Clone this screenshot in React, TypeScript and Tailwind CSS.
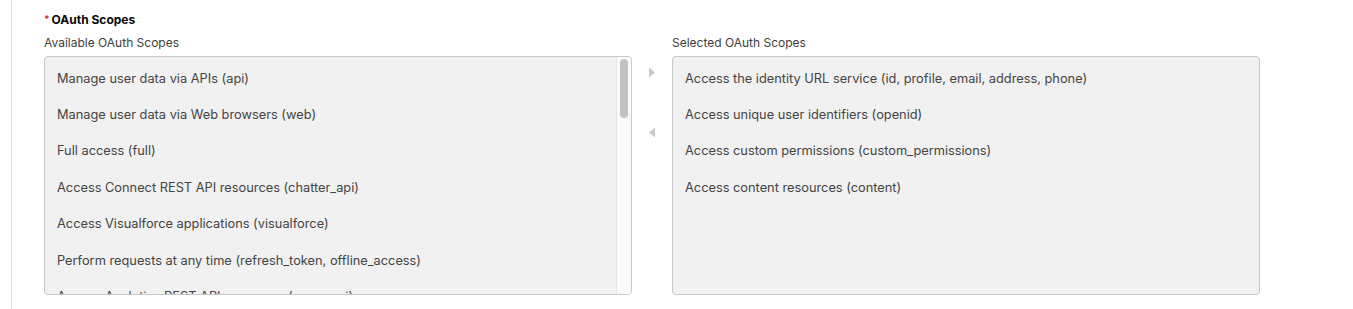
const available = [
  "Manage user data via APIs (api)",
  "Manage user data via Web browsers (web)",
  "Full access (full)",
  "Access Connect REST API resources (chatter_api)",
  "Access Visualforce applications (visualforce)",
  "Perform requests at any time (refresh_token, offline_access)",
  "Access Analytics REST API resources (wave_api)",
];

const selected = [
  "Access the identity URL service (id, profile, email, address, phone)",
  "Access unique user identifiers (openid)",
  "Access custom permissions (custom_permissions)",
  "Access content resources (content)",
];

function ListBox({ items, scroll }: { items: string[]; scroll?: boolean }) {
  return (
    <div className="relative flex h-[239px] w-[588px] overflow-hidden rounded-[4px] border border-[#c9c9c9] bg-[#f1f1f1]">
      <ul className="flex-1 pt-[3px]">
        {items.map((t) => (
          <li
            key={t}
            className="flex h-[36.4px] items-center whitespace-nowrap pl-[12px] text-[12.8px] text-[#444444]"
          >
            {t}
          </li>
        ))}
      </ul>
      {scroll && (
        <div className="w-[15px] shrink-0 border-l border-[#e6e6e6] bg-[#fafafa] pt-[2px] pl-[3px]">
          <div className="h-[59px] w-[8px] rounded-full bg-[#c2c2c2]" />
        </div>
      )}
    </div>
  );
}

export default function App() {
  return (
    <div
      className="flex h-[309px] w-[1353px] bg-white"
      style={{ fontFamily: "Inter, 'Liberation Sans', sans-serif" }}
    >
      <div className="ml-[11px] h-full border-l border-[#dddbda]" />
      <div className="pl-[32px] pt-[12px]">
        <div className="flex h-[15px] items-center text-[12px] font-bold text-[#080707]">
          <span className="mr-[2px] text-[10px] text-[#c23934]">*</span>
          OAuth Scopes
        </div>
        <div className="mt-[2px] flex">
          <div>
            <div className="flex h-[27px] items-center text-[12px] text-[#3e3e3c]">
              Available OAuth Scopes
            </div>
            <ListBox items={available} scroll />
          </div>
          <div className="flex w-[40px] flex-col items-center pt-[38px]">
            <svg width="8" height="11" viewBox="0 0 8 11" className="ml-[-1px]">
              <path d="M1 0.5 L7 5.5 L1 10.5 Z" fill="#c9c9c9" />
            </svg>
            <svg width="8" height="11" viewBox="0 0 8 11" className="ml-[-1px] mt-[49px]">
              <path d="M7 0.5 L1 5.5 L7 10.5 Z" fill="#c9c9c9" />
            </svg>
          </div>
          <div>
            <div className="flex h-[27px] items-center text-[12px] text-[#3e3e3c]">
              Selected OAuth Scopes
            </div>
            <ListBox items={selected} />
          </div>
        </div>
      </div>
    </div>
  );
}
